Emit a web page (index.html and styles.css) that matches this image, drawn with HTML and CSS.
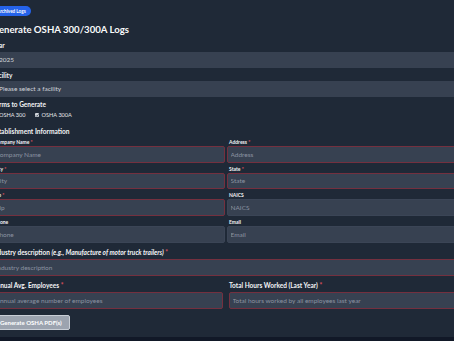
FILE: index.html
```html
<!DOCTYPE html>
<html lang="en">
<head>
<meta charset="utf-8">
<title>Generate OSHA 300/300A Logs</title>
<link rel="stylesheet" href="styles.css">
</head>
<body>
<div class="shell">
  <div class="page">
    <span class="badge">Archived Logs</span>
    <h1 class="title">Generate OSHA 300/300A Logs</h1>

    <label class="lbl lbl-year">Year</label>
    <div class="select sel-year">2025</div>

    <label class="lbl lbl-facility">Facility</label>
    <div class="select sel-facility">Please select a facility</div>

    <div class="lbl lbl-forms">Forms to Generate</div>
    <div class="checks">
      <span class="check"><span class="box"><svg viewBox="0 0 10 10"><path d="M2 5.2 L4.2 7.4 L8 2.8" fill="none" stroke="#374151" stroke-width="1.8"/></svg></span>OSHA 300</span>
      <span class="check"><span class="box"><svg viewBox="0 0 10 10"><path d="M2 5.2 L4.2 7.4 L8 2.8" fill="none" stroke="#374151" stroke-width="1.8"/></svg></span>OSHA 300A</span>
    </div>

    <h2 class="section">Establishment Information</h2>
    <div class="grid">
      <div class="field"><label class="sl">Company Name <span class="req">*</span></label><input class="inp required" placeholder="Company Name"></div>
      <div class="field"><label class="sl">Address <span class="req">*</span></label><input class="inp required" placeholder="Address"></div>
      <div class="field"><label class="sl">City <span class="req">*</span></label><input class="inp required" placeholder="City"></div>
      <div class="field"><label class="sl">State <span class="req">*</span></label><input class="inp required" placeholder="State"></div>
      <div class="field"><label class="sl">Zip <span class="req">*</span></label><input class="inp required" placeholder="Zip"></div>
      <div class="field"><label class="sl">NAICS</label><input class="inp" placeholder="NAICS"></div>
      <div class="field"><label class="sl">Phone</label><input class="inp" placeholder="Phone"></div>
      <div class="field"><label class="sl">Email</label><input class="inp" placeholder="Email"></div>
    </div>

    <label class="lbl lbl-industry">Industry description <em>(e.g., Manufacture of motor truck trailers)</em> <span class="req">*</span></label>
    <input class="inp inp-lg required" placeholder="Industry description">

    <div class="grid2">
      <div class="field"><label class="lbl">Annual Avg. Employees <span class="req">*</span></label><input class="inp inp-lg required" placeholder="Annual average number of employees"></div>
      <div class="field"><label class="lbl">Total Hours Worked (Last Year) <span class="req">*</span></label><input class="inp inp-lg required" placeholder="Total hours worked by all employees last year"></div>
    </div>

    <button class="btn" type="button">Generate OSHA PDF(s)</button>
  </div>
</div>
</body>
</html>
```
FILE: styles.css
```css
html, body {
  margin: 0;
  padding: 0;
  background: #111827;
  font-family: Lato, "Noto Sans", sans-serif;
  overflow: hidden;
}
.shell {
  height: 337px;
  background: #1f2937;
  overflow: hidden;
}
.page {
  margin-left: -8px;
  width: 468px;
  padding-top: 6px;
  color: #f3f4f6;
}
.badge {
  display: block;
  width: fit-content;
  height: 10px;
  line-height: 10px;
  padding: 0 5px;
  font-size: 4.6px;
  font-weight: 700;
  color: #ffffff;
  background: #2563eb;
  border-radius: 5px;
}
.title {
  margin: 8px 0 0;
  font-size: 9.6px;
  line-height: 12px;
  font-weight: 700;
  color: #f9fafb;
}
.lbl {
  display: block;
  font-size: 6.5px;
  line-height: 8px;
  font-weight: 700;
  color: #f3f4f6;
  white-space: nowrap;
}
.lbl em { font-style: italic; }
.lbl-year { margin-top: 6px; }
.lbl-facility { margin-top: 4px; }
.lbl-forms { margin-top: 4px; }
.select {
  box-sizing: border-box;
  height: 16px;
  line-height: 16px;
  padding-left: 7px;
  font-size: 6.5px;
  color: #d1d5db;
  background: #374151;
  border-radius: 2px;
}
.sel-year { margin-top: 2px; }
.sel-facility { margin-top: 1px; }
.checks {
  margin-top: 2px;
  display: flex;
  gap: 9px;
  font-size: 5.6px;
  line-height: 8px;
  color: #e5e7eb;
}
.check {
  display: flex;
  align-items: center;
  gap: 2.5px;
}
.box {
  width: 4.5px;
  height: 4.5px;
  background: #d1d5db;
  border-radius: 1px;
  display: flex;
}
.box svg { width: 100%; height: 100%; }
.section {
  margin: 7.5px 0 0;
  font-size: 6.6px;
  line-height: 9px;
  font-weight: 700;
  color: #f3f4f6;
}
.grid {
  margin-top: 3.5px;
  display: grid;
  grid-template-columns: 1fr 1fr;
  column-gap: 2px;
  row-gap: 3.07px;
}
.field {
  display: flex;
  flex-direction: column;
  min-width: 0;
}
.sl {
  display: block;
  padding-left: 2px;
  font-size: 5px;
  line-height: 6px;
  font-weight: 700;
  color: #f3f4f6;
  margin-bottom: 1px;
  white-space: nowrap;
}
.req { color: #e0525f; font-style: normal; }
.inp {
  box-sizing: border-box;
  display: block;
  width: 100%;
  height: 16.6px;
  margin: 0;
  padding: 0 0 0 2.5px;
  font-family: Lato, "Noto Sans", sans-serif;
  font-size: 6.5px;
  color: #e5e7eb;
  background: #374151;
  border: 1px solid #3b4556;
  border-radius: 2px;
  outline: none;
}
.inp::placeholder { color: #8b93a1; }
.inp.required { border-color: #74303f; }
.inp-lg { height: 17px; margin-top: 1.5px; }
.lbl-industry { margin-top: 6.9px; }
.grid2 {
  margin-top: 6.5px;
  display: grid;
  grid-template-columns: 1fr 1fr;
  column-gap: 6px;
}
.btn {
  display: block;
  margin-top: 6px;
  height: 15px;
  padding: 0 7px;
  font-family: Lato, "Noto Sans", sans-serif;
  font-size: 6px;
  font-weight: 700;
  color: #ffffff;
  background: #9ca3af;
  border: 1px solid #c9ced6;
  border-radius: 2px;
}
```
